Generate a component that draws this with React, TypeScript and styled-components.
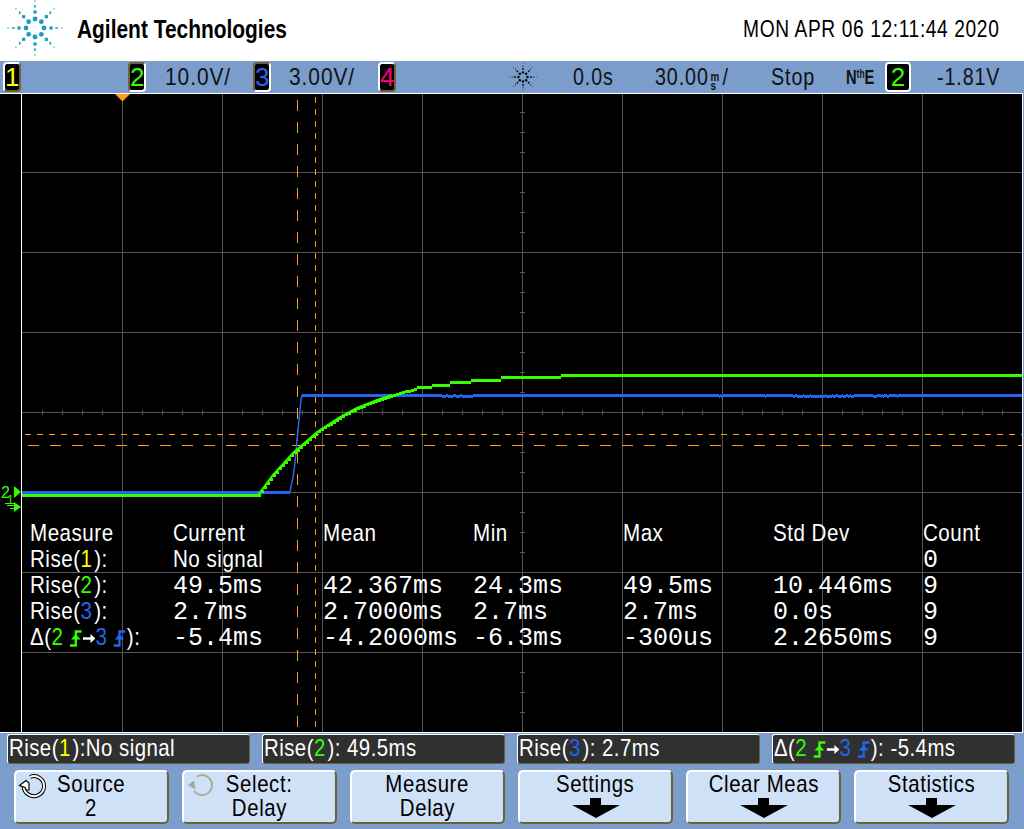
import * as React from 'react'
import styled, { createGlobalStyle, css } from 'styled-components'

const SANS = '"Liberation Sans", Arial, sans-serif'
const MONO = '"Liberation Mono", monospace'
const CH = { 1: '#ffff00', 2: '#33ff00', 3: '#2266ee', 4: '#ff0080' } as const
type Channel = keyof typeof CH

// the scope's bitmap font is much narrower than anything installed
const condensed = (k: number, origin = 'left center') => css`
  transform: scaleX(${k});
  transform-origin: ${origin};
  white-space: nowrap;
`

const GlobalStyle = createGlobalStyle`
  html, body {
    margin: 0;
    background: #7b9dcb;
  }
  #root {
    width: 1024px;
    height: 829px;
    overflow: hidden;
    font-family: ${SANS};
  }
`

const Page = styled.div`
  display: flex;
  flex-direction: column;
  width: 1024px;
  height: 829px;
  background: #7b9dcb;
`
const Header = styled.header`
  display: flex;
  height: 61px;
  background: #fff;
  color: #000;
`
const Brand = styled.div`
  margin-left: 14px;
  font-size: 25.5px;
  font-weight: bold;
  line-height: 58px;
  ${condensed(0.82)}
`
const Clock = styled.div`
  margin: 0 25px 0 auto;
  font-size: 24px;
  letter-spacing: 0.75px;
  line-height: 58px;
  ${condensed(0.8, 'right center')}
`
const BurstSvg = styled.svg<{ $ml: number }>`
  display: block;
  flex: none;
  margin-left: ${p => p.$ml}px;
`
const StatusBar = styled.div`
  display: grid;
  grid-template-columns: 125px 37px 88px 36px 89px 132px 63px 82px 116px 75px 39px 52px 1fr;
  align-items: center;
  height: 32px;
  padding-left: 3px;
  font-size: 24px;
  letter-spacing: 1.1px;
  color: #111;
`
const Reading = styled.div`
  ${condensed(0.82)}
`
const VoltReading = styled.div`
  ${condensed(0.87)}
`
const Badge = styled.div<{ $ch: Channel; $on?: boolean }>`
  box-sizing: border-box;
  width: 18px;
  height: 30px;
  border: 2px solid;
  border-radius: 4px;
  border-color: ${p => (p.$on ? '#6b6238 #fff #fff #6b6238' : '#fff #6b6238 #6b6238 #fff')};
  background: #000;
  color: ${p => CH[p.$ch]};
  font-size: 26px;
  line-height: 26px;
  letter-spacing: 0;
  text-align: center;
`
const TrigBadge = styled(Badge)`
  width: 26px;
  border-color: #fff;
`
const BurstCell = styled.div`
  display: flex;
`
const Stack = styled.span`
  display: inline-flex;
  flex-direction: column;
  vertical-align: 4px;
  margin: 0 4px 0 2px;
  font-size: 12px;
  font-weight: bold;
  line-height: 9px;
  letter-spacing: 0;
`
const TrigMode = styled.div`
  font-size: 21px;
  font-weight: bold;
  letter-spacing: 0;
  ${condensed(0.7)}
  sup {
    font-size: 12px;
    line-height: 0;
    vertical-align: 6px;
  }
`
const Screen = styled.div`
  flex: none;
  display: flex;
  width: 1023px;
  box-sizing: border-box;
  height: 640px;
  border: solid #fff;
  border-width: 1px 1px 1px 0;
  background: #000;
`
const Gutter = styled.div`
  flex: none;
  width: 21px;
`
const Plot = styled.div`
  position: relative;
  flex: 1;
  border-left: 1px solid #fff;
`
const Chart = styled.svg`
  display: block;
`
const Table = styled.div`
  position: absolute;
  left: 8px;
  top: 426px;
  display: grid;
  grid-template-columns: 143px repeat(5, 150px) 60px;
  grid-auto-rows: 26px;
  align-items: baseline;
  line-height: 26px;
  color: #fff;
  font-size: 24.5px;
  letter-spacing: 0.6px;
`
const Label = styled.div`
  ${condensed(0.84)}
`
const Value = styled.div`
  font-family: ${MONO};
  font-size: 25px;
  letter-spacing: 0;
  white-space: nowrap;
`
const Tint = styled.span<{ $ch: Channel }>`
  color: ${p => CH[p.$ch]};
  margin-right: 2px;
`
const EdgeSvg = styled.svg`
  vertical-align: -2px;
  margin: 0 1px 0 5px;
`
const ArrowSvg = styled.svg`
  vertical-align: 1px;
`
const Panel = styled.div`
  flex: 1;
  display: flex;
  flex-direction: column;
  gap: 6px;
  padding: 1px 0 0 7px;
`
const Messages = styled.div`
  display: flex;
  gap: 12px;
`
const Message = styled.div`
  box-sizing: border-box;
  width: 243px;
  height: 30px;
  padding-left: 1px;
  border: 1.5px solid;
  border-color: #fff #6b6238 #6b6238 #fff;
  border-radius: 3px;
  background: #303030;
  color: #fff;
  font-size: 24px;
  line-height: 26px;
  letter-spacing: 0.55px;
`
const MessageText = styled.div`
  ${condensed(0.85)}
`
const Softkeys = styled.div`
  display: flex;
  gap: 13px;
  margin-left: 7px;
`
const Softkey = styled.div`
  position: relative;
  box-sizing: border-box;
  display: flex;
  flex-direction: column;
  align-items: center;
  width: 155px;
  height: 54px;
  border: 2px solid;
  border-color: #fff #6b6238 #6b6238 #fff;
  border-radius: 5px;
  background: #cfe1f7;
  color: #000;
  font-size: 24px;
  line-height: 24px;
  letter-spacing: 0.7px;
`
const KeyLine = styled.div`
  ${condensed(0.85, 'center')}
`
const KnobIcon = styled.svg`
  position: absolute;
  left: 2px;
  top: 1px;
`
const ArrowIcon = styled.svg`
  display: block;
  margin-top: 2px;
`
const MarkerSvg = styled.svg`
  display: block;
`

// 8 spokes of shrinking marks, same shape for the logo and the acquire indicator
const RINGS = [
  { r: 9, w: 4.8, h: 4.8 },
  { r: 16, w: 3.2, h: 3.2 },
  { r: 21.6, w: 1.6, h: 2.6 },
  { r: 27, w: 1.2, h: 1.2 }
]
const Burst = ({ size, color, ml }: { size: number; color: string; ml: number }) => (
  <BurstSvg $ml={ml} width={size} height={size} viewBox="-28 -28 56 56">
    {RINGS.map((ring, i) =>
      [0, 1, 2, 3, 4, 5, 6, 7].map(k => {
        const a = (k * Math.PI) / 4
        const x = Math.sin(a) * ring.r
        const y = -Math.cos(a) * ring.r
        if (i === 0) return <circle key={k} cx={x} cy={y} r={ring.w / 2} fill={color} />
        const flat = k === 2 || k === 6
        const w = flat ? ring.h : ring.w
        const h = flat ? ring.w : ring.h
        return <rect key={`${i}-${k}`} x={x - w / 2} y={y - h / 2} width={w} height={h} fill={color} />
      })
    )}
  </BurstSvg>
)

const EdgeIcon = ({ ch }: { ch: Channel }) => (
  <EdgeSvg width="15" height="17" viewBox="0 0 13 17" preserveAspectRatio="none">
    <path d="M0.5 15.5H6.5V1.5H12.5" fill="none" stroke={CH[ch]} strokeWidth="2.4" />
    <path d="M1.5 9.5L6.5 4L11.5 9.5Z" fill={CH[ch]} />
  </EdgeSvg>
)

const DeltaLabel = () => (
  <>
    Δ(<Tint $ch={2}>2</Tint>
    <EdgeIcon ch={2} />
    <ArrowSvg width="15" height="11" viewBox="0 0 15 11">
      <path d="M0 5.5H10" stroke="#fff" strokeWidth="2.4" />
      <path d="M9 1L15 5.5L9 10Z" fill="#fff" />
    </ArrowSvg>
    <Tint $ch={3}>3</Tint>
    <EdgeIcon ch={3} />)
  </>
)

// rows of the statistics overlay: label, then Current Mean Min Max StdDev Count
const ROWS: { ch?: Channel; cells: string[] }[] = [
  { ch: 1, cells: ['No signal', '', '', '', '', '0'] },
  { ch: 2, cells: ['49.5ms', '42.367ms', '24.3ms', '49.5ms', '10.446ms', '9'] },
  { ch: 3, cells: ['2.7ms', '2.7000ms', '2.7ms', '2.7ms', '0.0s', '9'] },
  { cells: ['-5.4ms', '-4.2000ms', '-6.3ms', '-300us', '2.2650ms', '9'] }
]
const HEADS = ['Measure', 'Current', 'Mean', 'Min', 'Max', 'Std Dev', 'Count']

// green trace read off the screen; repeated x means a step
const GREEN: [number, number][] = [
  [258, 495], [273, 475], [293, 453], [317, 432], [340, 417], [357, 408], [377, 400], [392, 395],
  [410, 390], [418, 387], [432, 387], [432, 385], [450, 385], [450, 382], [470, 382], [470, 380],
  [501, 380], [501, 377], [560, 377], [560, 375], [1022, 375]
]
const greenAt = (x: number) => {
  for (let i = GREEN.length - 1; i > 0; i--) {
    const [x0, y0] = GREEN[i - 1]
    const [x1, y1] = GREEN[i]
    if (x >= x0 && x <= x1 && x1 > x0) return y0 + ((y1 - y0) * (x - x0)) / (x1 - x0)
  }
  return 375
}
const greenPath = () => {
  let d = 'M22 495.5H258'
  for (let x = 258; x < 1022; x += 3) d += `M${x} ${Math.round(greenAt(x)) + 0.5}h3`
  return d
}

// spots where the blue trace sits one pixel low
const NOISE = [
  [442, 446], [448, 453], [456, 460], [462, 473], [719, 720], [721, 722], [765, 766],
  [793, 795], [797, 803], [804, 810], [811, 822], [823, 825], [826, 832], [833, 836],
  [838, 842], [843, 846], [848, 850], [851, 854], [873, 877], [881, 882], [883, 884],
  [887, 889], [897, 898]
]

const Traces = () => {
  const grid: string[] = []
  for (let x = 122; x < 1022; x += 100) grid.push(`M${x + 0.5} 94V732`)
  for (let y = 172; y < 732; y += 80) grid.push(`M22 ${y + 0.5}H1022`)
  const ticks: string[] = []
  for (let x = 42; x < 1022; x += 20) ticks.push(`M${x + 0.5} 410V415`)
  for (let y = 112; y < 732; y += 20) ticks.push(`M520 ${y + 0.5}H525`)
  return (
    <Chart width="1000" height="638" viewBox="22 94 1000 638">
      <path d={[...grid, ...ticks].join('')} stroke="#555" strokeWidth="1" fill="none" shapeRendering="crispEdges" />
      <path d="M297.5 100V732" stroke="#ff9a20" strokeDasharray="11 11" shapeRendering="crispEdges" />
      <path d="M315.5 97V732" stroke="#ff9a20" strokeDasharray="6 6" shapeRendering="crispEdges" />
      <path d="M25 434.5H1022" stroke="#ff9a20" strokeDasharray="6 6" shapeRendering="crispEdges" />
      <path d="M28 445.5H1022" stroke="#ff9a20" strokeDasharray="11 11" shapeRendering="crispEdges" />
      <path d="M115 94H130L122.5 101.5Z" fill="#ff9a20" />

      <path d="M22 492.5H290" stroke="#2266ee" strokeWidth="3" shapeRendering="crispEdges" />
      <path d="M290 492L293 477L295 463L297 440L299 420L301 400L302 395" stroke="#2266ee" strokeWidth="1.5" fill="none" />
      <path d="M302 395.5H1022" stroke="#2266ee" strokeWidth="3" shapeRendering="crispEdges" />
      {NOISE.map(([a, b]) => (
        <React.Fragment key={a}>
          <rect x={a} y={394} width={b - a} height={1} fill="#000" />
          <rect x={a} y={397} width={b - a} height={1} fill="#2266ee" />
        </React.Fragment>
      ))}
      <path d="M258 495L273 475L293 453L317 432L340 417L357 408L377 400L392 395" stroke="#33ff00" strokeWidth="2" fill="none" />
      <path d={greenPath()} stroke="#33ff00" strokeWidth="3" fill="none" shapeRendering="crispEdges" />
    </Chart>
  )
}

const GroundMarkers = () => (
  <MarkerSvg width="21" height="638" viewBox="0 94 21 638">
    <text x="1" y="498" fontFamily={SANS} fontSize="16" fill="#33ff00">2</text>
    <path d="M14 486L21 492L14 498Z" fill="#33ff00" />
    <text x="7" y="504" fontFamily={SANS} fontSize="12" fill="#33ff00">1</text>
    <path d="M14 502L21 507L14 512Z" fill="#33ff00" />
    <path d="M5 503.5H14M7 505.5H14M10 508.5H14" stroke="#33ff00" strokeWidth="1" shapeRendering="crispEdges" />
  </MarkerSvg>
)

const Knob = ({ active }: { active: boolean }) =>
  active ? (
    <KnobIcon width="30" height="30" viewBox="0 0 30 30">
      <path d="M12 4A10 10 0 1 1 10.5 21.5Q6 19 5.5 13" fill="none" stroke="#000" strokeWidth="4" />
      <path d="M12 4A10 10 0 1 1 10.5 21.5Q6 19 5.5 13" fill="none" stroke="#fff" strokeWidth="2" />
      <path d="M1.5 12.5L8 7.5L11 10V17H8L7 14.5Z" fill="#fff" stroke="#000" strokeWidth="1.2" />
    </KnobIcon>
  ) : (
    <KnobIcon width="30" height="30" viewBox="0 0 30 30">
      <path d="M11 3.5A10 10 0 1 1 8 18" fill="none" stroke="#a8a890" strokeWidth="1.8" />
      <path d="M2 12L8 7.5L9.5 16.5Z" fill="#a8a890" />
    </KnobIcon>
  )

const DownArrow = () => (
  <ArrowIcon width="50" height="20" viewBox="0 0 50 20">
    <path d="M19 0H30V7H49L25 20L1 7H19Z" fill="#000" />
  </ArrowIcon>
)

const App = () => (
  <Page>
    <GlobalStyle />
    <Header>
      <Burst size={56} color="#1b9dc0" ml={7} />
      <Brand>Agilent Technologies</Brand>
      <Clock>MON APR 06 12:11:44 2020</Clock>
    </Header>
    <StatusBar>
      <Badge $ch={1}>1</Badge>
      <Badge $ch={2} $on>2</Badge>
      <VoltReading>10.0V/</VoltReading>
      <Badge $ch={3} $on>3</Badge>
      <VoltReading>3.00V/</VoltReading>
      <Badge $ch={4}>4</Badge>
      <BurstCell>
        <Burst size={28} color="#000" ml={-1} />
      </BurstCell>
      <Reading>0.0s</Reading>
      <Reading>
        30.00<Stack><span>m</span><span>s</span></Stack>/
      </Reading>
      <Reading>Stop</Reading>
      <TrigMode>N<sup>th</sup>E</TrigMode>
      <TrigBadge $ch={2} $on>2</TrigBadge>
      <Reading>-1.81V</Reading>
    </StatusBar>
    <Screen>
      <Gutter>
        <GroundMarkers />
      </Gutter>
      <Plot>
        <Traces />
        <Table>
          {HEADS.map(h => (
            <Label key={h}>{h}</Label>
          ))}
          {ROWS.map((row, i) => (
            <React.Fragment key={i}>
              <Label>
                {row.ch ? (
                  <>
                    Rise(<Tint $ch={row.ch}>{row.ch}</Tint>):
                  </>
                ) : (
                  <>
                    <DeltaLabel />:
                  </>
                )}
              </Label>
              {row.cells.map((cell, j) =>
                cell === 'No signal' ? <Label key={j}>{cell}</Label> : <Value key={j}>{cell}</Value>
              )}
            </React.Fragment>
          ))}
        </Table>
      </Plot>
    </Screen>
    <Panel>
      <Messages>
        <Message><MessageText>Rise(<Tint $ch={1}>1</Tint>):No signal</MessageText></Message>
        <Message><MessageText>Rise(<Tint $ch={2}>2</Tint>): 49.5ms</MessageText></Message>
        <Message><MessageText>Rise(<Tint $ch={3}>3</Tint>): 2.7ms</MessageText></Message>
        <Message><MessageText><DeltaLabel />: -5.4ms</MessageText></Message>
      </Messages>
      <Softkeys>
        <Softkey>
          <Knob active />
          <KeyLine>Source</KeyLine>
          <KeyLine>2</KeyLine>
        </Softkey>
        <Softkey>
          <Knob active={false} />
          <KeyLine>Select:</KeyLine>
          <KeyLine>Delay</KeyLine>
        </Softkey>
        <Softkey>
          <KeyLine>Measure</KeyLine>
          <KeyLine>Delay</KeyLine>
        </Softkey>
        <Softkey>
          <KeyLine>Settings</KeyLine>
          <DownArrow />
        </Softkey>
        <Softkey>
          <KeyLine>Clear Meas</KeyLine>
          <DownArrow />
        </Softkey>
        <Softkey>
          <KeyLine>Statistics</KeyLine>
          <DownArrow />
        </Softkey>
      </Softkeys>
    </Panel>
  </Page>
)

export default App
